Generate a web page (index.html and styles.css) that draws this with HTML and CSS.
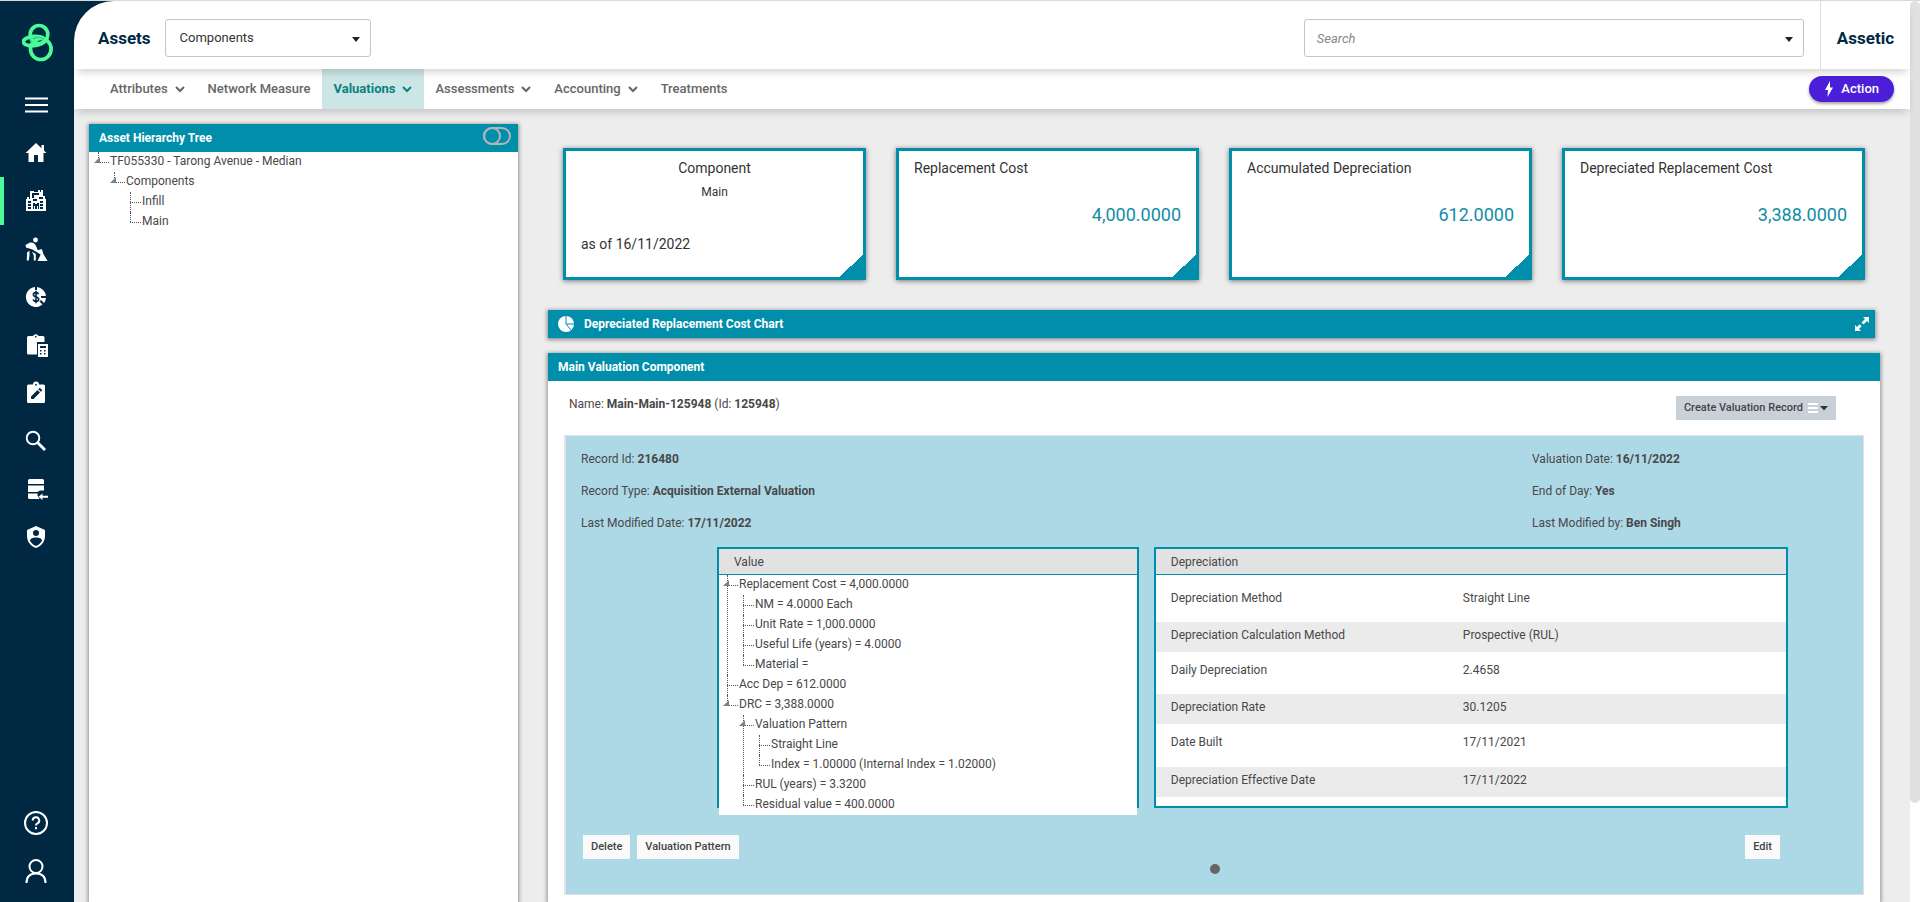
FILE: index.html
```html
<!DOCTYPE html>
<html lang="en">
<head>
<meta charset="utf-8">
<title>Assetic - Components</title>
<link rel="stylesheet" href="styles.css">
</head>
<body>
<div class="app">
  <nav class="rail" aria-label="Modules">
    <a class="logo" href="#" aria-label="Home page">
      <svg width="32" height="40" viewBox="0 0 32 40" fill="none" stroke="#4bfd98" stroke-width="3.700">
        <ellipse cx="18.800" cy="26" rx="10.300" ry="10.500"/>
        <ellipse cx="17" cy="11.500" rx="8.800" ry="9"/>
        <ellipse cx="11.800" cy="18" rx="10.500" ry="4.600" transform="rotate(-5 11.800 18)"/>
        <path d="M7.800 15.500c.4 1.800 1.200 3 2.200 4M12.500 14.500c3-.3 7-.1 9.500 1.800" stroke="#2fd583" stroke-width="1.500"/>
      </svg>
    </a>
    <a class="rail-item" href="#" aria-label="Menu"><svg width="24" height="24" viewBox="0 0 24 24"><path d="M1 5.500h23M1 12h23M1 18.500h23" stroke="#fff" stroke-width="2.200"/></svg></a>
    <a class="rail-item" href="#" aria-label="Dashboard"><svg width="24" height="24" viewBox="0 0 24 24"><path d="M12 2 1.500 12H4.500v9H10v-7h4v7h5.500v-9H22.500L20 9.600V4h-2.500v3.200Z"/></svg></a>
    <a class="rail-item active" href="#" aria-label="Assets"><svg width="24" height="24" viewBox="0 0 24 24"><path fill-rule="evenodd" d="M2 10h1V8h2v2h1V2h4v1h4V1h2v2h1V1h2v6h2v3h1v12H2ZM8 4v5h2V6h5V4ZM4 12v2h3v-2Zm0 3v2h3v-2Zm0 3v2h3v-2ZM9 10v2h4v-2Zm6-2v2h4V8Zm1 4v2h3v-2Zm0 3v2h3v-2Zm0 3v2h3v-2ZM9 14v6h1v-3h1v3h2v-3h1v3h1v-6h-2v1h-2v-1Z"/></svg></a>
    <a class="rail-item" href="#" aria-label="Works"><svg width="24" height="24" viewBox="0 0 24 24"><circle cx="11.500" cy="3" r="2.400"/><path d="M1.500 8 5.500 5.800c3-.7 5.500.6 6.500 3.200l1.800 4.300 4-1.300 1.800 5.500 4 6.500H13.500l3.200-6.500L8.500 12.500 2 10.500ZM3 15.500l2.500-1.800L5.500 18 4.800 23.500H2.800Zm5-.8 3.800 2.400v6.400H9.800v-5Z"/></svg></a>
    <a class="rail-item" href="#" aria-label="Finance"><svg width="24" height="24" viewBox="0 0 24 24"><path d="M11 2v3h2V2a10 10 0 0 1 9 9h-5v2h5a10 10 0 0 1-2 5l-3-3-1.500 1.500 3 3A10 10 0 1 1 11 2Z"/><path d="M14.500 9.300c-.3-1.300-1.300-1.700-2.500-1.700-1.500 0-2.600.8-2.600 2.100 0 3 5.300 1.500 5.300 4.500 0 1.400-1.200 2.200-2.700 2.200-1.400 0-2.500-.7-2.700-2M12 5.800v12.400" fill="none" stroke="#002843" stroke-width="1.600"/></svg></a>
    <a class="rail-item" href="#" aria-label="Budget"><svg width="24" height="24" viewBox="0 0 24 24"><path fill-rule="evenodd" d="M4.500 3H9a3 3 0 0 1 5.500 0H19a1.500 1.500 0 0 1 1.500 1.500V9H13v12.500H4.500A1.500 1.500 0 0 1 3 20V4.500A1.500 1.500 0 0 1 4.500 3ZM11 3v1.500h1.500V3Z"/><path fill-rule="evenodd" d="M14 11h10v13H14Zm2 2v2h6v-2Zm0 4v1.500h1.500V17Zm4 0v1.500h1.500V17Zm-4 3v1.500h1.500V20Zm4 0v1.500h1.500V20Z"/></svg></a>
    <a class="rail-item" href="#" aria-label="Assessments"><svg width="24" height="24" viewBox="0 0 24 24"><path fill-rule="evenodd" d="M4.500 3.500H9a3 3 0 0 1 6 0h4.500A1.500 1.500 0 0 1 21 5v15.500a1.500 1.500 0 0 1-1.500 1.500h-15A1.500 1.500 0 0 1 3 20.500V5a1.500 1.500 0 0 1 1.500-1.500ZM11.200 3v1.600h1.600V3Z"/><path d="M7 18v-2.500l6.500-6.500 2.500 2.500L9.500 18ZM14.300 8.200 15.800 6.700 18.300 9.200 16.800 10.700Z" fill="#002843"/></svg></a>
    <a class="rail-item" href="#" aria-label="Search"><svg width="24" height="24" viewBox="0 0 24 24" fill="none" stroke="#fff"><circle cx="9" cy="9" r="6.300" stroke-width="1.900"/><path d="m13.500 13.500 7.500 7.500" stroke-width="2.800"/></svg></a>
    <a class="rail-item" href="#" aria-label="Data exchange"><svg width="24" height="24" viewBox="0 0 24 24"><path d="M5.500 2h13A1.500 1.500 0 0 1 20 3.500V7H4V3.500A1.500 1.500 0 0 1 5.500 2ZM4 8.500h16v5H16L13.500 15H4Zm0 8h9.500v2l2 3.500h-10A1.500 1.500 0 0 1 4 20.500ZM24 18.700v2h-5.500V23L14.500 19.700 18.500 16.400v2.300Z"/></svg></a>
    <a class="rail-item" href="#" aria-label="Administration"><svg width="24" height="24" viewBox="0 0 24 24"><path d="M12,1L3,5V11C3,16.550 6.840,21.740 12,23C17.160,21.740 21,16.550 21,11V5L12,1M12,5A3,3 0 0,1 15,8A3,3 0 0,1 12,11A3,3 0 0,1 9,8A3,3 0 0,1 12,5M17.130,17C15.920,18.850 14.110,20.240 12,20.920C9.890,20.240 8.080,18.850 6.870,17C6.530,16.500 6.240,16 6,15.470C6,13.820 8.710,12.470 12,12.470C15.290,12.470 18,13.790 18,15.470C17.760,16 17.470,16.500 17.130,17Z"/></svg></a>
    <div class="rail-spacer"></div>
    <a class="rail-item" href="#" aria-label="Help"><svg width="26" height="26" viewBox="0 0 26 26" fill="none" stroke="#fff" stroke-width="2"><circle cx="13" cy="13" r="11"/><path d="M9.800 10.500a3.200 3.200 0 1 1 4.600 2.800c-1 .5-1.400 1-1.400 2.200M13 17v2.200"/></svg></a>
    <a class="rail-item" href="#" aria-label="Profile"><svg width="26" height="26" viewBox="0 0 26 26" fill="none" stroke="#fff" stroke-width="2"><circle cx="13" cy="8.500" r="6.500"/><path d="M3.500 25c0-6 3.500-9.500 9.500-9.500s9.500 3.500 9.500 9.500"/></svg></a>
  </nav>

  <div class="page">
    <header class="topbar">
      <h1 class="brand">Assets</h1>
      <div class="picker">
        <select class="picker-select" aria-label="Asset view"><option>Components</option></select>
        <svg class="caret" width="8" height="5" viewBox="0 0 8 5"><path d="M0 0h8L4 5Z"/></svg>
      </div>
      <div class="search">
        <input class="search-input" type="text" placeholder="Search" aria-label="Search">
        <svg class="caret" width="8" height="5" viewBox="0 0 8 5"><path d="M0 0h8L4 5Z"/></svg>
      </div>
      <div class="tenant">Assetic</div>
    </header>

    <nav class="subnav" aria-label="Component sections">
      <a class="tab" href="#">Attributes <svg class="chev" width="10" height="7" viewBox="0 0 10 7"><path d="m1 1 4 4 4-4"/></svg></a>
      <a class="tab" href="#">Network Measure</a>
      <a class="tab current" href="#">Valuations <svg class="chev" width="10" height="7" viewBox="0 0 10 7"><path d="m1 1 4 4 4-4"/></svg></a>
      <a class="tab" href="#">Assessments <svg class="chev" width="10" height="7" viewBox="0 0 10 7"><path d="m1 1 4 4 4-4"/></svg></a>
      <a class="tab" href="#">Accounting <svg class="chev" width="10" height="7" viewBox="0 0 10 7"><path d="m1 1 4 4 4-4"/></svg></a>
      <a class="tab" href="#">Treatments</a>
      <button class="action" type="button"><svg width="8" height="16" viewBox="0 0 8 16"><path d="M5 0 0 9h3L2.500 16 8 6.500H5Z" fill="#fff"/></svg>Action</button>
    </nav>

    <main class="content">
      <section class="panel tree-panel">
        <div class="panel-head">
          <h2 class="panel-title">Asset Hierarchy Tree</h2>
          <button class="pin" type="button" aria-label="Toggle tree"><svg width="28" height="18" viewBox="0 0 28 18" fill="none" stroke="#b5b5b5" stroke-width="2"><rect x="1" y="1" width="26" height="16" rx="8"/><circle cx="9" cy="9" r="8"/></svg></button>
        </div>
        <ul class="tree">
          <li><span class="fold"></span><a href="#">TF055330 - Tarong Avenue - Median</a>
            <ul>
              <li><span class="fold"></span><a href="#">Components</a>
                <ul>
                  <li><a href="#">Infill</a></li>
                  <li><a href="#">Main</a></li>
                </ul>
              </li>
            </ul>
          </li>
        </ul>
      </section>

      <div class="detail">
        <div class="cards">
          <article class="card">
            <h3 class="card-title centred">Component</h3>
            <p class="card-sub">Main</p>
            <p class="card-date">as of 16/11/2022</p>
          </article>
          <article class="card">
            <h3 class="card-title">Replacement Cost</h3>
            <p class="card-value">4,000.0000</p>
          </article>
          <article class="card">
            <h3 class="card-title">Accumulated Depreciation</h3>
            <p class="card-value">612.0000</p>
          </article>
          <article class="card">
            <h3 class="card-title">Depreciated Replacement Cost</h3>
            <p class="card-value">3,388.0000</p>
          </article>
        </div>

        <section class="panel chart-panel">
          <div class="panel-head">
            <svg width="16" height="16" viewBox="0 0 16 16"><circle cx="8" cy="8" r="8" fill="#fff"/><path d="M8 0v8h8M8 8l5 6" fill="none" stroke="#008eab" stroke-width="1"/></svg>
            <h2 class="panel-title">Depreciated Replacement Cost Chart</h2>
            <button class="expand" type="button" aria-label="Expand chart"><svg width="14" height="14" viewBox="0 0 14 14" fill="#fff"><path d="M8 0h6v6l-2-2-3.500 3.500L6.500 5.500 10 2ZM6 14H0V8l2 2 2.700-2.700 2 2L4 12Z"/></svg></button>
          </div>
        </section>

        <section class="panel main-panel">
          <div class="panel-head"><h2 class="panel-title">Main Valuation Component</h2></div>
          <div class="name-row">
            <p class="fact">Name: <b>Main-Main-125948</b> (Id: <b>125948</b>)</p>
            <button class="create" type="button">Create Valuation Record
              <svg width="20" height="10" viewBox="0 0 20 10"><path d="M0 1h10M0 5h10M0 9h10" stroke="#fff" stroke-width="2"/><path d="M12 3h8l-4 4.500Z" fill="#333"/></svg>
            </button>
          </div>

          <div class="record">
            <div class="facts">
              <div class="fact-col">
                <p class="fact">Record Id: <b>216480</b></p>
                <p class="fact">Record Type: <b>Acquisition External Valuation</b></p>
                <p class="fact">Last Modified Date: <b>17/11/2022</b></p>
              </div>
              <div class="fact-col side">
                <p class="fact">Valuation Date: <b>16/11/2022</b></p>
                <p class="fact">End of Day: <b>Yes</b></p>
                <p class="fact">Last Modified by: <b>Ben Singh</b></p>
              </div>
            </div>

            <div class="boxes">
              <section class="box value-box">
                <h3 class="box-title">Value</h3>
                <ul class="tree">
                  <li><span class="fold"></span><a href="#">Replacement Cost = 4,000.0000</a>
                    <ul>
                      <li><a href="#">NM = 4.0000 Each</a></li>
                      <li><a href="#">Unit Rate = 1,000.0000</a></li>
                      <li><a href="#">Useful Life (years) = 4.0000</a></li>
                      <li><a href="#">Material =</a></li>
                    </ul>
                  </li>
                  <li><a href="#">Acc Dep = 612.0000</a></li>
                  <li><span class="fold"></span><a href="#">DRC = 3,388.0000</a>
                    <ul>
                      <li><span class="fold"></span><a href="#">Valuation Pattern</a>
                        <ul>
                          <li><a href="#">Straight Line</a></li>
                          <li><a href="#">Index = 1.00000 (Internal Index = 1.02000)</a></li>
                        </ul>
                      </li>
                      <li><a href="#">RUL (years) = 3.3200</a></li>
                      <li><a href="#">Residual value = 400.0000</a></li>
                    </ul>
                  </li>
                </ul>
              </section>
              <section class="box dep-box">
                <h3 class="box-title">Depreciation</h3>
                <table class="dep">
                  <tr><th scope="row">Depreciation Method</th><td>Straight Line</td></tr>
                  <tr><th scope="row">Depreciation Calculation Method</th><td>Prospective (RUL)</td></tr>
                  <tr><th scope="row">Daily Depreciation</th><td>2.4658</td></tr>
                  <tr><th scope="row">Depreciation Rate</th><td>30.1205</td></tr>
                  <tr><th scope="row">Date Built</th><td>17/11/2021</td></tr>
                  <tr><th scope="row">Depreciation Effective Date</th><td>17/11/2022</td></tr>
                </table>
              </section>
            </div>

            <div class="record-actions">
              <button class="btn" type="button">Delete</button>
              <button class="btn" type="button">Valuation Pattern</button>
              <button class="btn push" type="button">Edit</button>
            </div>
            <div class="pager"><span class="dot"></span></div>
          </div>
        </section>
      </div>
    </main>
  </div>
  <div class="scroll"><div class="scroll-thumb"></div></div>
</div>
</body>
</html>
```
FILE: styles.css
```css
* { box-sizing: border-box; }
html, body { height: 100%; margin: 0; }
body { overflow: hidden; font: 12px/20px Roboto, "Liberation Sans", sans-serif; color: #484848; background: #ededed; }
h1, h2, h3, p, ul { margin: 0; padding: 0; }
ul { list-style: none; }
a { color: inherit; text-decoration: none; }
button, select, input { font: inherit; color: inherit; margin: 0; }
button { border: 0; padding: 0; background: none; cursor: pointer; }
svg { display: block; flex: none; }

.app { display: flex; height: 100vh; border-top: 1px solid #d9dadb; }

/* Left icon rail */
.rail { flex: none; width: 74px; display: flex; flex-direction: column; padding-bottom: 7px; background: #002843; }
.logo { height: 80px; display: flex; justify-content: center; padding: 22px 0 0 2px; }
.rail-item { height: 48px; display: flex; align-items: center; justify-content: center; padding-right: 2px; }
.rail-item svg { fill: #fff; }
.rail-item svg[fill="none"] { fill: none; }
.rail-item.active { background: linear-gradient(#4bfd98, #4bfd98) no-repeat left / 4px 100%; }
.rail-spacer { flex: 1; }

/* Top bar and section tabs */
.page { flex: 1; min-width: 0; display: flex; flex-direction: column; background: linear-gradient(#002843, #002843) no-repeat left top / 60px 60px; }
.topbar { position: relative; z-index: 2; flex: none; height: 68px; display: flex; align-items: center; background: #fff; border-top-left-radius: 40px; box-shadow: 0 6px 8px -3px rgba(0, 0, 0, .18); padding: 6px 0 0 24px; }
.brand { font-size: 17px; font-weight: 700; color: #002843; margin-right: 14px; }
.picker { position: relative; width: 206px; }
.picker-select { width: 100%; height: 38px; padding: 0 14px; border: 1px solid #c4c4c4; border-radius: 3px; background: #fff; appearance: none; font-size: 13px; color: #333; }
.caret { position: absolute; right: 11px; top: 18px; fill: #222; pointer-events: none; }
.search { position: relative; width: 500px; margin: 0 16px 0 auto; }
.search-input { width: 100%; height: 38px; padding: 0 12px; border: 1px solid #c4c4c4; border-radius: 3px; background: #fff; font-size: 13px; }
.search-input::placeholder { font-style: italic; color: #888; opacity: 1; }
.tenant { align-self: stretch; display: flex; align-items: center; margin-top: -6px; padding: 6px 16px 0; border-left: 1px solid #ddd; font-size: 17px; font-weight: 700; color: #002843; }

.subnav { position: relative; z-index: 1; flex: none; height: 40px; display: flex; align-items: stretch; padding: 0 16px 0 25px; background: #fff; box-shadow: 0 6px 8px -3px rgba(0, 0, 0, .18); }
.tab { display: flex; align-items: center; gap: 7px; padding: 0 12px 0 11px; font-size: 13px; font-weight: 500; color: #666; }
.chev { fill: none; stroke: currentColor; stroke-width: 2; }
.tab.current { background: #cbe6e5; color: #0b8080; font-weight: 700; }
.action { align-self: center; margin-left: auto; height: 26px; display: flex; align-items: center; gap: 8px; padding: 0 15px 0 16px; border-radius: 13px; background: #4b1fd9; color: #fff; font-size: 13px; font-weight: 500; box-shadow: 0 2px 3px rgba(0, 0, 0, .35); }

/* Panels */
.content { flex: 1; min-height: 0; display: grid; grid-template-columns: 429px minmax(0, 1fr); gap: 30px; padding: 15px 30px 0 15px; background: #ededed; overflow: hidden; }
.panel { background: #fff; box-shadow: 0 1px 4px 1px rgba(0, 0, 0, .4); }
.panel-head { display: flex; align-items: center; height: 28px; padding: 0 10px; background: #008eab; color: #fff; }
.panel-title { font-size: 12px; font-weight: 700; }
.tree-panel { min-height: 0; }
.pin { align-self: flex-start; margin: 3px -3px 0 auto; }

/* Tree with dotted connectors */
.tree { padding-left: 9px; background: #fff; }
.tree ul { margin-left: 4px; }
.tree li { position: relative; padding-left: 12px; }
.tree li::before { content: ""; position: absolute; left: 0; top: 0; bottom: 0; border-left: 1px dotted #555; }
.tree li:last-child::before { bottom: auto; height: 10px; }
.tree li::after { content: ""; position: absolute; left: 0; top: 10px; width: 11px; border-top: 1px dotted #555; }
.tree a { display: block; width: max-content; height: 20px; line-height: 18px; }
.fold { position: absolute; z-index: 1; left: -4px; top: 5px; border-style: solid; border-width: 0 0 6px 6px; border-color: transparent transparent #808080 transparent; }

/* Summary cards */
.detail { min-width: 0; display: flex; flex-direction: column; }
.cards { display: grid; grid-template-columns: repeat(4, minmax(0, 1fr)); gap: 30px; padding: 24px 15px 30px; }
.card { height: 132px; padding: 7px 15px; border: 3px solid #008eab; background: linear-gradient(to bottom right, transparent 50%, #008eab 50%) no-repeat right bottom / 24px 22px #fff; box-shadow: 0 1px 5px rgba(0, 0, 0, .5); }
.card-title { font-size: 14px; font-weight: 400; line-height: 20px; color: #333; }
.centred, .card-sub { text-align: center; }
.card-sub { margin-top: 4px; color: #333; }
.card-date { margin-top: 32px; font-size: 14px; color: #333; }
.card-value { margin-top: 27px; font-size: 18px; font-weight: 400; text-align: right; color: #128ca5; }

.chart-panel { margin: 0 5px 15px 0; }
.chart-panel .panel-title { margin-left: 10px; }
.expand { margin: 0 -4px 0 auto; }
.main-panel { flex: 1 0 auto; }
.name-row { display: flex; justify-content: space-between; align-items: flex-start; padding: 13px 44px 0 21px; height: 54px; }
.create { display: flex; align-items: center; gap: 5px; height: 24px; margin-top: 2px; padding: 0 8px; background: #c9d0d8; font-size: 11px; font-weight: 500; color: #444; }

/* Valuation record */
.record { height: 460px; margin: 0 16px 7px; padding: 13px 0 0; border: 1px solid #dfe3e5; border-left-width: 2px; background: #add8e6; }
.facts { display: flex; justify-content: space-between; padding-left: 15px; }
.fact-col { display: flex; flex-direction: column; gap: 12px; }
.fact-col.side { width: 331px; }
.boxes { display: flex; gap: 15px; padding: 14px 75px 0 151px; }
.box { height: 261px; min-width: 0; border: 2px solid #008eab; background: #fff; }
.value-box { flex: 421; }
.dep-box { flex: 635; }
.box-title { height: 26px; padding: 0 15px; border-bottom: 1px solid #008eab; background: #e2e2e2; font-size: 12px; font-weight: 400; line-height: 26px; }
.value-box .tree { padding-left: 8px; }
.dep { width: 100%; border-collapse: collapse; table-layout: fixed; }
.dep th, .dep td { height: 42px; padding: 8px 0 0; text-align: left; vertical-align: top; font-weight: 400; }
.dep th { width: 307px; padding-left: 15px; }
.dep tr:first-child > * { height: 47px; padding-top: 13px; }
.dep tr:nth-child(5) > * { height: 43px; }
.dep tr:nth-child(even) { background: #ebebeb; }
.dep tr:nth-child(even) > * { height: 30px; padding-top: 3px; }

.record-actions { display: flex; gap: 7px; padding: 27px 83px 0 17px; }
.btn { height: 24px; padding: 0 8px; background: #fafafa; font-size: 11px; font-weight: 500; color: #444; }
.push { margin-left: auto; }
.pager { display: flex; justify-content: center; padding-top: 5px; }
.dot { width: 10px; height: 10px; border-radius: 50%; background: #666; }

.scroll { flex: none; width: 10px; background: #fff; }
.scroll-thumb { height: 89%; border-radius: 5px; background: #e0e0e0; }
```
